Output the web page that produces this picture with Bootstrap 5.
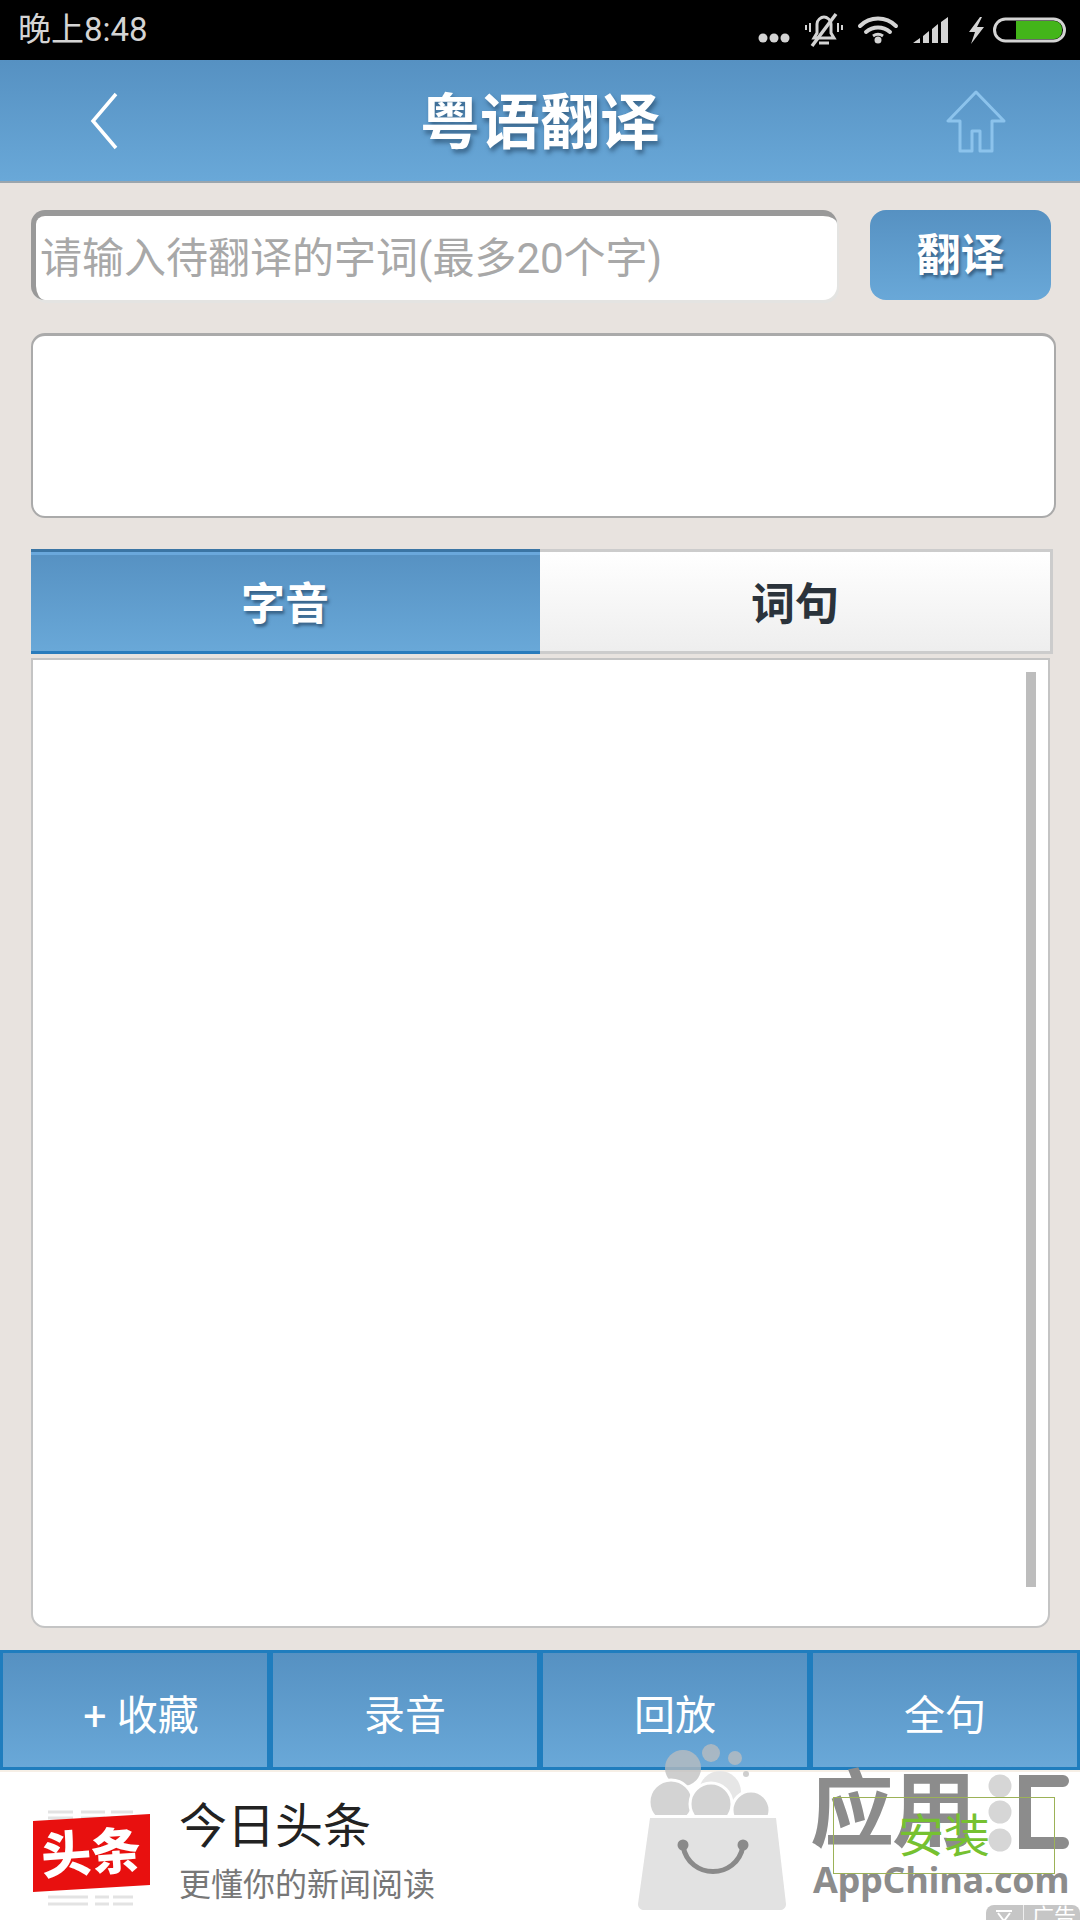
<!DOCTYPE html>
<html lang="zh-CN">
<head>
    <meta charset="UTF-8">
    <meta name="viewport" content="width=device-width, initial-scale=1">
    <title>粤语翻译</title>
    <link href="https://cdn.jsdelivr.net/npm/bootstrap@5.3.0/dist/css/bootstrap.min.css" rel="stylesheet">
    <style>
        body { margin: 0; background: #e8e3df; font-family: Roboto, "Noto Sans CJK SC", sans-serif; }
        .app-page { width: 1080px; height: 1920px; overflow: hidden; background: #e8e3df; }

        .status-strip { height: 60px; background: #000; color: #d4d4d4; }
        .status-time { font-size: 33px; line-height: 60px; padding-left: 18px; }

        .blue-fill { background: linear-gradient(#5691c2, #69a8d8); }
        .title-strip { height: 123px; border-bottom: 2px solid #9aa5ad; }
        .title-side { width: 200px; }
        .title-text { font-size: 60px; font-weight: 700; color: #fff; text-shadow: 2px 4px 4px rgba(30, 60, 90, .55); line-height: 1; padding-top: 6px; }

        .work-area { padding: 27px 24px 0 31px; height: 1467px; }
        .word-input.form-control { width: 806px; height: 90px; border: 0; border-top: 6px solid #999; border-left: 5px solid #999; border-radius: 14px; padding: 0 0 0 4px; font-size: 42px; box-shadow: 2px 3px 0 #e4e4e2; }
        .word-input.form-control::placeholder { color: #a8a8a8; }
        .go-btn.btn { width: 181px; height: 90px; margin-left: 33px; border: 0; border-radius: 16px; color: #fff; font-size: 44px; font-weight: 700; padding: 2px 0 0; text-shadow: 2px 3px 3px rgba(30, 60, 90, .6); }
        .result-box { height: 185px; margin-top: 33px; background: #fff; border: 2px solid #aaa; border-top-width: 3px; border-radius: 14px; }

        .tab-row { margin-top: 31px; width: 1022px; }
        .tab-row .btn { height: 105px; border-radius: 0; font-size: 44px; font-weight: 700; flex: none; }
        .tab-on.btn { width: 510px; padding: 6px 2px 0 0; color: #fff; border: 0; border-top: 3px solid #3b75a4; border-bottom: 3px solid #2a7cbc; text-shadow: 2px 3px 3px rgba(30, 60, 90, .6); box-shadow: inset 0 3px 0 #6aa8dc; }
        .tab-off.btn { width: 513px; padding: 6px 0 0; color: #2b333b; background: linear-gradient(#fff, #eeeeee); border: 3px solid #ccc; border-left: 0; }
        .list-box { position: relative; width: 1019px; height: 970px; margin-top: 4px; background: #fff; border: 2px solid #c4c4c4; border-radius: 0 0 14px 14px; }
        .list-thumb { position: absolute; left: 993px; top: 12px; width: 10px; height: 915px; background: #bdbdbd; }

        .action-btn.btn { width: 270px; height: 120px; border: 3px solid #1f7dbe; border-radius: 0; color: #fff; font-size: 41px; padding: 14px 0 0; }
        .action-first.btn { padding-left: 12px; }

        .ad-strip { position: relative; height: 150px; background: #fff; padding: 25px 25px 0 33px; border-top: 2px solid #f6efe6; }
        .ad-logo { margin-top: 12px; }
        .ad-name { margin: 2px 0 0 28px; font-size: 48px; line-height: 56px; color: #222; }
        .ad-desc { font-size: 32px; line-height: 44px; color: #777; margin: 8px 0 0 28px; }
        .install-box { position: relative; z-index: 2; width: 222px; height: 77px; border: 1px solid #9cb257; color: #76c130; font-size: 46px; line-height: 1; }

        .mark-wrap { position: absolute; left: 630px; top: 1740px; width: 450px; height: 180px; pointer-events: none; }
        .mark-name { position: absolute; left: 180px; top: 26px; font-size: 84px; font-weight: 700; line-height: 1.1; color: #8c8c8c; letter-spacing: -2px; }
        .mark-site { position: absolute; left: 183px; top: 120px; font-family: "Open Sans", sans-serif; font-size: 36px; font-weight: 700; line-height: 1.1; color: #8c8c8c; letter-spacing: -.3px; }
        .ad-tag { position: absolute; right: 0; bottom: 0; width: 94px; height: 15px; background: #c6c6c6; border-radius: 8px 8px 0 0; color: #fff; font-size: 22px; line-height: 24px; overflow: hidden; white-space: nowrap; }
        .ad-tag-sep { border-left: 1px solid #eee; margin-left: 9px; padding-left: 8px; }
    </style>
</head>
<body>
<div class="app-page position-relative d-flex flex-column">

    <div class="status-strip d-flex justify-content-between">
        <div class="status-time">晚上8:48</div>
        <svg width="330" height="60" viewBox="750 0 330 60">
            <circle cx="763" cy="38" r="4.5" fill="#d4d4d4"/>
            <circle cx="774" cy="38" r="4.5" fill="#d4d4d4"/>
            <circle cx="785" cy="38" r="4.5" fill="#d4d4d4"/>
            <g fill="none" stroke="#d4d4d4" stroke-width="3">
                <path d="M814 38h20l-3-5v-9c0-4-4-7-7-7s-7 3-7 7v9z"/>
                <path d="M819 43h10" stroke-width="3"/>
                <path d="M810 23v9M838 23v9M806 25v5M842 25v5" stroke-width="2"/>
                <path d="M836 14l-24 32" stroke-width="3.5"/>
            </g>
            <g fill="none" stroke="#d4d4d4" stroke-linecap="round" stroke-width="4">
                <path d="M860 26c10-10 26-10 36 0"/>
                <path d="M866 32c7-6 17-6 24 0"/>
            </g>
            <circle cx="878" cy="40" r="3.5" fill="#d4d4d4"/>
            <path d="M873 36c3-2 7-2 10 0" fill="none" stroke="#d4d4d4" stroke-width="3"/>
            <path d="M913 43l7-5v5zM923 36l6-5v12h-6zM932 29l6-5v19h-6zM941 22l7-5v26h-7z" fill="#d4d4d4"/>
            <path d="M980 17l-11 15h6l-4 12 13-17h-7l5-10z" fill="#d4d4d4"/>
            <rect x="994.5" y="19" width="70" height="22" rx="11" fill="none" stroke="#d4d4d4" stroke-width="3"/>
            <path d="M1016 21h38a8 8 0 0 1 8 8v2a8 8 0 0 1-8 8h-38z" fill="#43b51a"/>
        </svg>
    </div>

    <div class="navbar blue-fill title-strip p-0 flex-nowrap">
        <div class="title-side back-col">
            <svg width="120" height="60" viewBox="-90 0 120 60"><path d="M26 3L3 30l23 27" fill="none" stroke="#fff" stroke-width="3.5"/></svg>
        </div>
        <div class="title-text">粤语翻译</div>
        <div class="title-side text-end">
            <svg width="134" height="64" viewBox="0 0 134 64"><path d="M30 3L2 32h12v30h12V42h8v20h12V32h12z" fill="none" stroke="#8cc3ec" stroke-width="3" stroke-linejoin="round"/></svg>
        </div>
    </div>

    <div class="work-area">
        <div class="d-flex">
            <input type="text" class="form-control word-input" placeholder="请输入待翻译的字词(最多20个字)">
            <button class="btn blue-fill go-btn">翻译</button>
        </div>
        <div class="result-box"></div>
        <div class="btn-group d-flex tab-row">
            <button class="btn blue-fill tab-on">字音</button>
            <button class="btn tab-off">词句</button>
        </div>
        <div class="list-box"><div class="list-thumb"></div></div>
    </div>

    <div class="d-flex">
        <button class="btn blue-fill action-btn action-first">+ 收藏</button>
        <button class="btn blue-fill action-btn">录音</button>
        <button class="btn blue-fill action-btn">回放</button>
        <button class="btn blue-fill action-btn">全句</button>
    </div>

    <div class="ad-strip d-flex align-items-start">
        <svg class="ad-logo" width="118" height="100" viewBox="0 0 118 100">
            <g stroke="#e3e3e3" stroke-width="3">
                <path d="M15 3h25M48 3h24M78 3h22M15 9h25M48 9h24M78 9h22M15 88h40M62 88h14M80 88h20M15 95h40M62 95h14M80 95h20"/>
            </g>
            <polygon points="0,12 117,5 117,76 0,83" fill="#e8100f"/>
            <text x="58" y="62" text-anchor="middle" transform="rotate(-4 58 44)" font-family="'Noto Sans CJK SC', sans-serif" font-size="50" font-weight="900" fill="#fff">头条</text>
        </svg>
        <div>
            <div class="ad-name">今日头条</div>
            <div class="ad-desc">更懂你的新闻阅读</div>
        </div>
        <div class="install-box ms-auto d-flex align-items-center justify-content-center">安装</div>
    </div>

    <div class="mark-wrap">
        <svg class="position-absolute top-0 start-0" width="450" height="180" viewBox="630 1740 450 180">
            <g fill="#bdbdbd" fill-opacity=".75">
                <circle cx="683" cy="1768" r="18"/>
                <circle cx="711" cy="1753" r="9"/>
                <circle cx="735" cy="1758" r="7"/>
                <circle cx="746" cy="1774" r="3"/>
            </g>
            <circle cx="720" cy="1792" r="21" fill="#e6e6e6"/>
            <g fill="#d3d3d3" stroke="#fff" stroke-width="3">
                <circle cx="671" cy="1802" r="22"/>
                <circle cx="711" cy="1804" r="21"/>
                <circle cx="751" cy="1810" r="19"/>
            </g>
            <rect x="640" y="1815" width="140" height="12" fill="#fff"/>
            <path d="M650 1818h126l10 86c0 4-3 6-6 6H644c-3 0-6-2-6-6z" fill="#e2e2e2"/>
            <path d="M683 1846c6 34 54 34 60 0" fill="none" stroke="#8a8a8a" stroke-width="5"/>
            <circle cx="683" cy="1845" r="5.5" fill="#8a8a8a"/>
            <circle cx="743" cy="1845" r="5.5" fill="#8a8a8a"/>
            <g fill="#d6d6d6">
                <circle cx="1000" cy="1786" r="11.5"/>
                <circle cx="1000" cy="1812" r="11.5"/>
                <circle cx="1000" cy="1840" r="11.5"/>
            </g>
            <path d="M1063 1781h-38v62h38" fill="none" stroke="#8c8c8c" stroke-width="12" stroke-linecap="round"/>
        </svg>
        <div class="mark-name">应用</div>
        <div class="mark-site">AppChina.com</div>
    </div>
    <div class="ad-tag d-flex">
        <svg class="ms-2 mt-1" width="20" height="14" viewBox="0 0 20 14"><path d="M2 2h16M4 4l6 8 6-8" fill="none" stroke="#fff" stroke-width="2"/></svg>
        <span class="ad-tag-sep">广告</span>
    </div>
</div>
<script src="https://cdn.jsdelivr.net/npm/bootstrap@5.3.0/dist/js/bootstrap.bundle.min.js"></script>
</body>
</html>
